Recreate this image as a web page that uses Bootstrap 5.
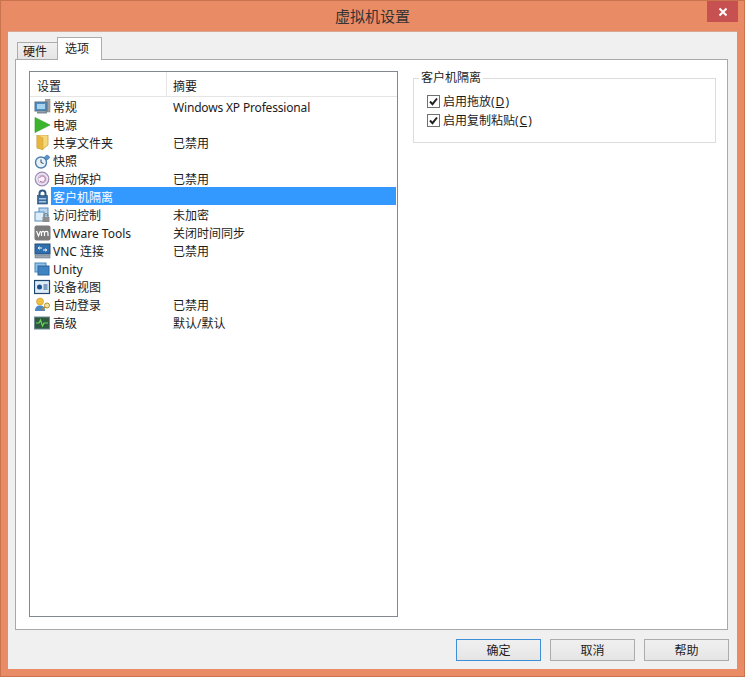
<!DOCTYPE html>
<html lang="zh">
<head>
<meta charset="utf-8">
<title>虚拟机设置</title>
<link href="https://cdn.jsdelivr.net/npm/bootstrap@5.3.0/dist/css/bootstrap.min.css" rel="stylesheet">
<script src="https://cdn.jsdelivr.net/npm/bootstrap@5.3.0/dist/js/bootstrap.bundle.min.js"></script>
<style>
html,body{margin:0;height:677px;overflow:hidden;background:#e98c65}
body{font:12px/18px "Noto Sans","Noto Sans CJK SC",sans-serif;color:#1c1c1c}
.vm-win{height:677px;background:#e98c65;border:1px solid #c9744f;padding:0 7px 7px;position:relative}
.vm-title{height:30px;font-size:15px;line-height:30px;text-align:center;color:#333;flex:none}
.vm-close{position:absolute;top:0;right:6px;width:31px;height:21px;background:#c75050;display:flex;align-items:center;justify-content:center}
.vm-client{background:#f0f0f0;border:1px solid #d9a78f;border-width:1px 0 0 0;padding:0 9px 0 7px;min-height:0}
.vm-tabs{height:27px;padding-left:2px;border:0;flex:none;align-items:flex-end;gap:0;position:relative;z-index:2}
.vm-tabs .nav-link{font-size:12px;line-height:16px;color:#1c1c1c;border:1px solid #acacac;border-bottom:0;border-radius:0;background:linear-gradient(#f0f0f0,#e5e5e5);margin:0;padding:1px 5px 0 0;height:17px;width:41px;text-align:center}
.vm-tabs .nav-link.active{background:#fff;height:23px;width:45px;margin-left:-1px;padding:3px 5px 0 0;margin-bottom:-1px;border-color:#acacac;color:#1c1c1c}
.vm-panel{background:#fff;border:1px solid #a9a9a9;padding:11px 11px 12px 13px;gap:15px;min-height:0}
.vm-list{width:369px;border:1px solid #828790;flex:none;background:#fff}
.vm-head{height:25px;border-bottom:1px solid #e5e5e5;line-height:29px}
.vm-head div:first-child{width:137px;padding-left:7px;border-right:1px solid #e5e5e5}
.vm-head div:last-child{padding-left:6px}
.vm-row{height:18px;line-height:22px;margin-right:1px}
.vm-ic{width:21px;flex:none;padding:1px 0 0 4px;display:flex;align-items:center}
.vm-ic svg{display:block}
.vm-name{width:122px;padding-left:2px;flex:none;white-space:nowrap}
.vm-sum{white-space:nowrap;flex:1}
.vm-latin{letter-spacing:-.17px}
.vm-sel{background:#3399ff;color:#fff;flex:1;display:flex}
.vm-group{width:303px;height:73px;border:1px solid #dcdcdc;margin:-1px 0 0;padding:0 13px;flex:none}
.vm-group legend{float:none;width:auto;font-size:12px;line-height:16px;margin:0 0 6px -8px;padding:0 2px;color:#1c1c1c}
.vm-check{height:19px;margin:0;padding:0;gap:3px;min-height:0;line-height:19px}
.vm-check .form-check-input{float:none;margin:0;width:13px;height:13px;border:1px solid #707070;border-radius:0;background-color:#fff;background-size:11px 11px;background-image:url("data:image/svg+xml,%3Csvg xmlns='http://www.w3.org/2000/svg' viewBox='0 0 11 11'%3E%3Cpath d='M2 5.500l2.500 2.700L9 2.500' fill='none' stroke='%23222' stroke-width='2'/%3E%3C/svg%3E");box-shadow:none}
.vm-check .form-check-label{white-space:nowrap}
.vm-check u{margin:0 1px}
.vm-foot{height:39px;padding-top:9px;gap:9px;flex:none;margin-right:-1px}
.vm-btn{width:85px;height:22px;padding:2px 0 0;font-size:12px;line-height:18px;color:#1c1c1c;border:1px solid #acacac;border-radius:0;background:linear-gradient(#f0f0f0,#e5e5e5)}
.vm-btn.vm-def{border-color:#3f8fd6}
</style>
</head>
<body>
<div class="vm-win d-flex flex-column">
  <div class="vm-title">虚拟机设置</div>
  <div class="vm-close"><svg width="10" height="10" viewBox="0 0 10 10"><path d="M1.500 1.500l7 7M8.500 1.500l-7 7" stroke="#fff" stroke-width="2"/></svg></div>
  <div class="vm-client flex-grow-1 d-flex flex-column">
    <ul class="nav nav-tabs vm-tabs">
      <li class="nav-item"><a class="nav-link" href="#">硬件</a></li>
      <li class="nav-item"><a class="nav-link active" href="#">选项</a></li>
    </ul>
    <div class="vm-panel flex-grow-1 d-flex">
      <div class="vm-list">
        <div class="vm-head d-flex"><div>设置</div><div>摘要</div></div>

        <div class="vm-row d-flex"><span class="vm-ic"><svg width="17" height="16" viewBox="0 0 17 16"><rect x="11.500" y="0" width="4.500" height="13" fill="#a3a3a3" stroke="#7d7d7d" stroke-width=".5"/><rect x="1" y="3" width="12" height="9" fill="#4a8cc4" stroke="#60707e"/><rect x="3" y="5" width="8" height="5" fill="#a8d4f0"/><rect x="3" y="12.500" width="10" height="2" fill="#7e8c98"/></svg></span><div class="vm-name">常规</div><div class="vm-sum vm-latin">Windows XP Professional</div></div>

        <div class="vm-row d-flex"><span class="vm-ic"><svg width="17" height="16" viewBox="0 0 17 16"><path d="M1 .500L16 8 1 15.500z" fill="#3bb52e" stroke="#2d9a25" stroke-width=".6"/></svg></span><div class="vm-name">电源</div><div class="vm-sum"></div></div>

        <div class="vm-row d-flex"><span class="vm-ic"><svg width="17" height="16" viewBox="0 0 17 16"><path d="M3 0h11v10l-5 4-6-1z" fill="#f5d978" stroke="#c9a24a" stroke-width=".8"/><path d="M3 0l6 3v12l-6-2z" fill="#e8b63c" stroke="#c9a24a" stroke-width=".5"/></svg></span><div class="vm-name">共享文件夹</div><div class="vm-sum">已禁用</div></div>

        <div class="vm-row d-flex"><span class="vm-ic"><svg width="17" height="16" viewBox="0 0 17 16"><circle cx="7" cy="9.500" r="5.500" fill="#e6f0f8" stroke="#4b7fae" stroke-width="1.400"/><path d="M7 6.500v3l2.500 1" fill="none" stroke="#345" stroke-width="1"/><path d="M10 5l2-2.500a2.500 2.500 0 0 1 3.500 2.500l-2.500 2z" fill="#5a93c6" stroke="#3c6d9a" stroke-width=".6"/></svg></span><div class="vm-name">快照</div><div class="vm-sum"></div></div>

        <div class="vm-row d-flex"><span class="vm-ic"><svg width="17" height="16" viewBox="0 0 17 16"><circle cx="8" cy="8" r="6.800" fill="#e9e2ef" stroke="#9d8bb3" stroke-width="1.200"/><circle cx="8" cy="8" r="4" fill="#f7f3f8" stroke="#c9b6d4"/><path d="M5.500 7a3 3 0 1 1 .5 3" fill="none" stroke="#b868a8"/></svg></span><div class="vm-name">自动保护</div><div class="vm-sum">已禁用</div></div>

        <div class="vm-row d-flex"><span class="vm-ic"><svg width="17" height="16" viewBox="0 0 17 16"><path d="M5.500 7V4.500a3 3 0 0 1 6 0V7" fill="none" stroke="#2f5a88" stroke-width="2"/><rect x="3.500" y="6.500" width="10" height="8.500" fill="#3a6a9c" stroke="#2a4a6c" stroke-width=".6"/><rect x="5" y="9" width="7" height="1.500" fill="#a9c6e0"/><rect x="5" y="12" width="7" height="1.500" fill="#a9c6e0"/></svg></span><div class="vm-sel"><div class="vm-name">客户机隔离</div><div class="vm-sum"></div></div></div>

        <div class="vm-row d-flex"><span class="vm-ic"><svg width="17" height="16" viewBox="0 0 17 16"><rect x="5" y="1" width="9" height="8" fill="#b9d6ee" stroke="#5b8fbd"/><rect x="1" y="5" width="9" height="9" fill="#dcecf8" stroke="#5b8fbd"/><path d="M10 10V8.500a2 2 0 0 1 4 0V10" fill="none" stroke="#777"/><rect x="8.500" y="10" width="7" height="5" fill="#8d8d8d"/></svg></span><div class="vm-name">访问控制</div><div class="vm-sum">未加密</div></div>

        <div class="vm-row d-flex"><span class="vm-ic"><svg width="17" height="16" viewBox="0 0 17 16"><rect x=".500" y=".500" width="16" height="15" rx="2" fill="#7c7c7c"/><path d="M2.500 6l2 5 2-5M7.500 11V6.500M7.500 7.500c1-1.500 2.500-1.500 3 0V11M10.500 7.500c1-1.500 3.500-1.500 3.500 .5v3" fill="none" stroke="#fff" stroke-width="1.200"/></svg></span><div class="vm-name">VMware Tools</div><div class="vm-sum">关闭时间同步</div></div>

        <div class="vm-row d-flex"><span class="vm-ic"><svg width="17" height="16" viewBox="0 0 17 16"><rect x="1" y="1" width="15" height="10" fill="#2f6fad" stroke="#264f78"/><path d="M4 5h4M9 7h4" stroke="#fff"/><path d="M6 6.500L4 5l2-1.500M11 8.500L13 7l-2-1.500" fill="none" stroke="#fff" stroke-width=".7"/><rect x="1" y="12" width="15" height="3" fill="#9aa7b2" stroke="#6c7884" stroke-width=".6"/></svg></span><div class="vm-name">VNC 连接</div><div class="vm-sum">已禁用</div></div>

        <div class="vm-row d-flex"><span class="vm-ic"><svg width="17" height="16" viewBox="0 0 17 16"><rect x="1" y="2" width="11" height="9" fill="#8fc2ea" stroke="#4a85b8"/><rect x="4" y="5" width="11" height="9" fill="#3f83c2" stroke="#2f6498"/></svg></span><div class="vm-name">Unity</div><div class="vm-sum"></div></div>

        <div class="vm-row d-flex"><span class="vm-ic"><svg width="17" height="16" viewBox="0 0 17 16"><rect x=".500" y="1.500" width="15" height="13" fill="#dcebf7" stroke="#20466e" stroke-width="1.200"/><circle cx="5.500" cy="8" r="2.500" fill="#1f4f88"/><path d="M9.500 6h4M9.500 8h4M9.500 10h4" stroke="#1f4f88"/></svg></span><div class="vm-name">设备视图</div><div class="vm-sum"></div></div>

        <div class="vm-row d-flex"><span class="vm-ic"><svg width="17" height="16" viewBox="0 0 17 16"><circle cx="6" cy="4.500" r="3.500" fill="#f0c040" stroke="#c5952a" stroke-width=".6"/><path d="M1 14c0-4 2-5.500 5-5.500s5 1.500 5 5.500z" fill="#4d87c4"/><circle cx="13" cy="8.500" r="2.500" fill="#f3e2a0" stroke="#b28a2e"/><path d="M11 10l-3 3" stroke="#b28a2e" stroke-width="1.400"/></svg></span><div class="vm-name">自动登录</div><div class="vm-sum">已禁用</div></div>

        <div class="vm-row d-flex"><span class="vm-ic"><svg width="17" height="16" viewBox="0 0 17 16"><rect x=".500" y="2" width="15" height="12" fill="#2f5a3f" stroke="#6f8a98"/><path d="M2 8h3l1.500-3 2 6 1.500-3h4" fill="none" stroke="#66d85a" stroke-width="1.200"/></svg></span><div class="vm-name">高级</div><div class="vm-sum">默认/默认</div></div>
      </div>

      <fieldset class="vm-group">
        <legend>客户机隔离</legend>
        <div class="form-check vm-check d-flex align-items-center"><input class="form-check-input" type="checkbox" id="c1" checked><label class="form-check-label" for="c1">启用拖放(<u>D</u>)</label></div>
        <div class="form-check vm-check d-flex align-items-center"><input class="form-check-input" type="checkbox" id="c2" checked><label class="form-check-label" for="c2">启用复制粘贴(<u>C</u>)</label></div>
      </fieldset>
    </div>
    <div class="vm-foot d-flex justify-content-end">
      <button type="button" class="btn vm-btn vm-def">确定</button>
      <button type="button" class="btn vm-btn">取消</button>
      <button type="button" class="btn vm-btn">帮助</button>
    </div>
  </div>
</div>
</body>
</html>
